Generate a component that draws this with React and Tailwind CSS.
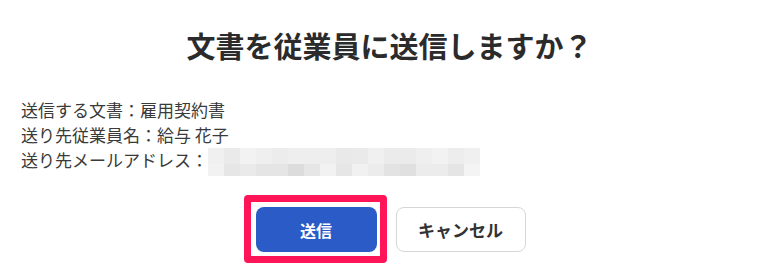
const jp = { fontFamily: '"Noto Sans CJK JP", "Noto Sans", sans-serif' };

// pixelated (masked) mail address, two rows of 16px cells
const maskTop = ["#f0f0f0", "#eaeaea", "#f2f2f2", "#efefef", "#ececec", "#eeeeee", "#eeeeee", "#eeeeee", "#e9e9e9", "#eaeaea", "#f0f0f0", "#ebebeb", "#ebebeb", "#efefef", "#f2f2f2", "#ededed", "#f0f0f0"];
const maskBottom = ["#f2f2f2", "#e6e6e6", "#eaeaea", "#e5e5e5", "#e5e5e5", "#dcdcdc", "#e6e6e6", "#f2f2f2", "#e6e6e6", "#f1f1f1", "#ececec", "#e3e3e3", "#e0e0e0", "#ececec", "#ececec", "#e5e5e5", "#f4f4f4"];

const MaskedText = () => (
    <div className="flex flex-col mt-[1px]">
        <div className="flex h-4">
            {maskTop.map((c, i) => (
                <div key={i} className="w-4 h-full" style={{ backgroundColor: c }} />
            ))}
        </div>
        <div className="flex h-3">
            {maskBottom.map((c, i) => (
                <div key={i} className="w-4 h-full" style={{ backgroundColor: c }} />
            ))}
        </div>
    </div>
);

export default function App() {
    return (
        <div className="w-[779px] h-[270px] bg-white text-[#333333] overflow-hidden" style={jp}>
            <h2 className="pt-[23px] text-center text-[29px] leading-[44px] font-bold text-[#2b2b2b]">
                文書を従業員に送信しますか？
            </h2>

            <div className="mt-[30px] px-[21px] text-[17px] leading-[25px] text-[#3a3a3a]">
                <p>送信する文書：雇用契約書</p>
                <p>送り先従業員名：給与 花子</p>
                <div className="flex items-start h-[25px]">
                    <span>送り先メールアドレス：</span>
                    <MaskedText />
                </div>
            </div>

            <div className="mt-[35px] flex justify-center gap-[19px] pl-[2px]">
                <div className="relative">
                    <button className="w-[121px] h-[45px] rounded-lg bg-[#2a5bc6] text-white text-[16px] font-bold">
                        送信
                    </button>
                    <div className="absolute -top-[12px] -bottom-[11px] -left-[12px] -right-[10px] border-[7px] border-[#ff1458] rounded-[4px] pointer-events-none" />
                </div>
                <button className="w-[130px] h-[45px] rounded-lg border border-[#d6d6d6] bg-white text-[17px] font-bold text-[#333333]">
                    キャンセル
                </button>
            </div>
        </div>
    );
}
